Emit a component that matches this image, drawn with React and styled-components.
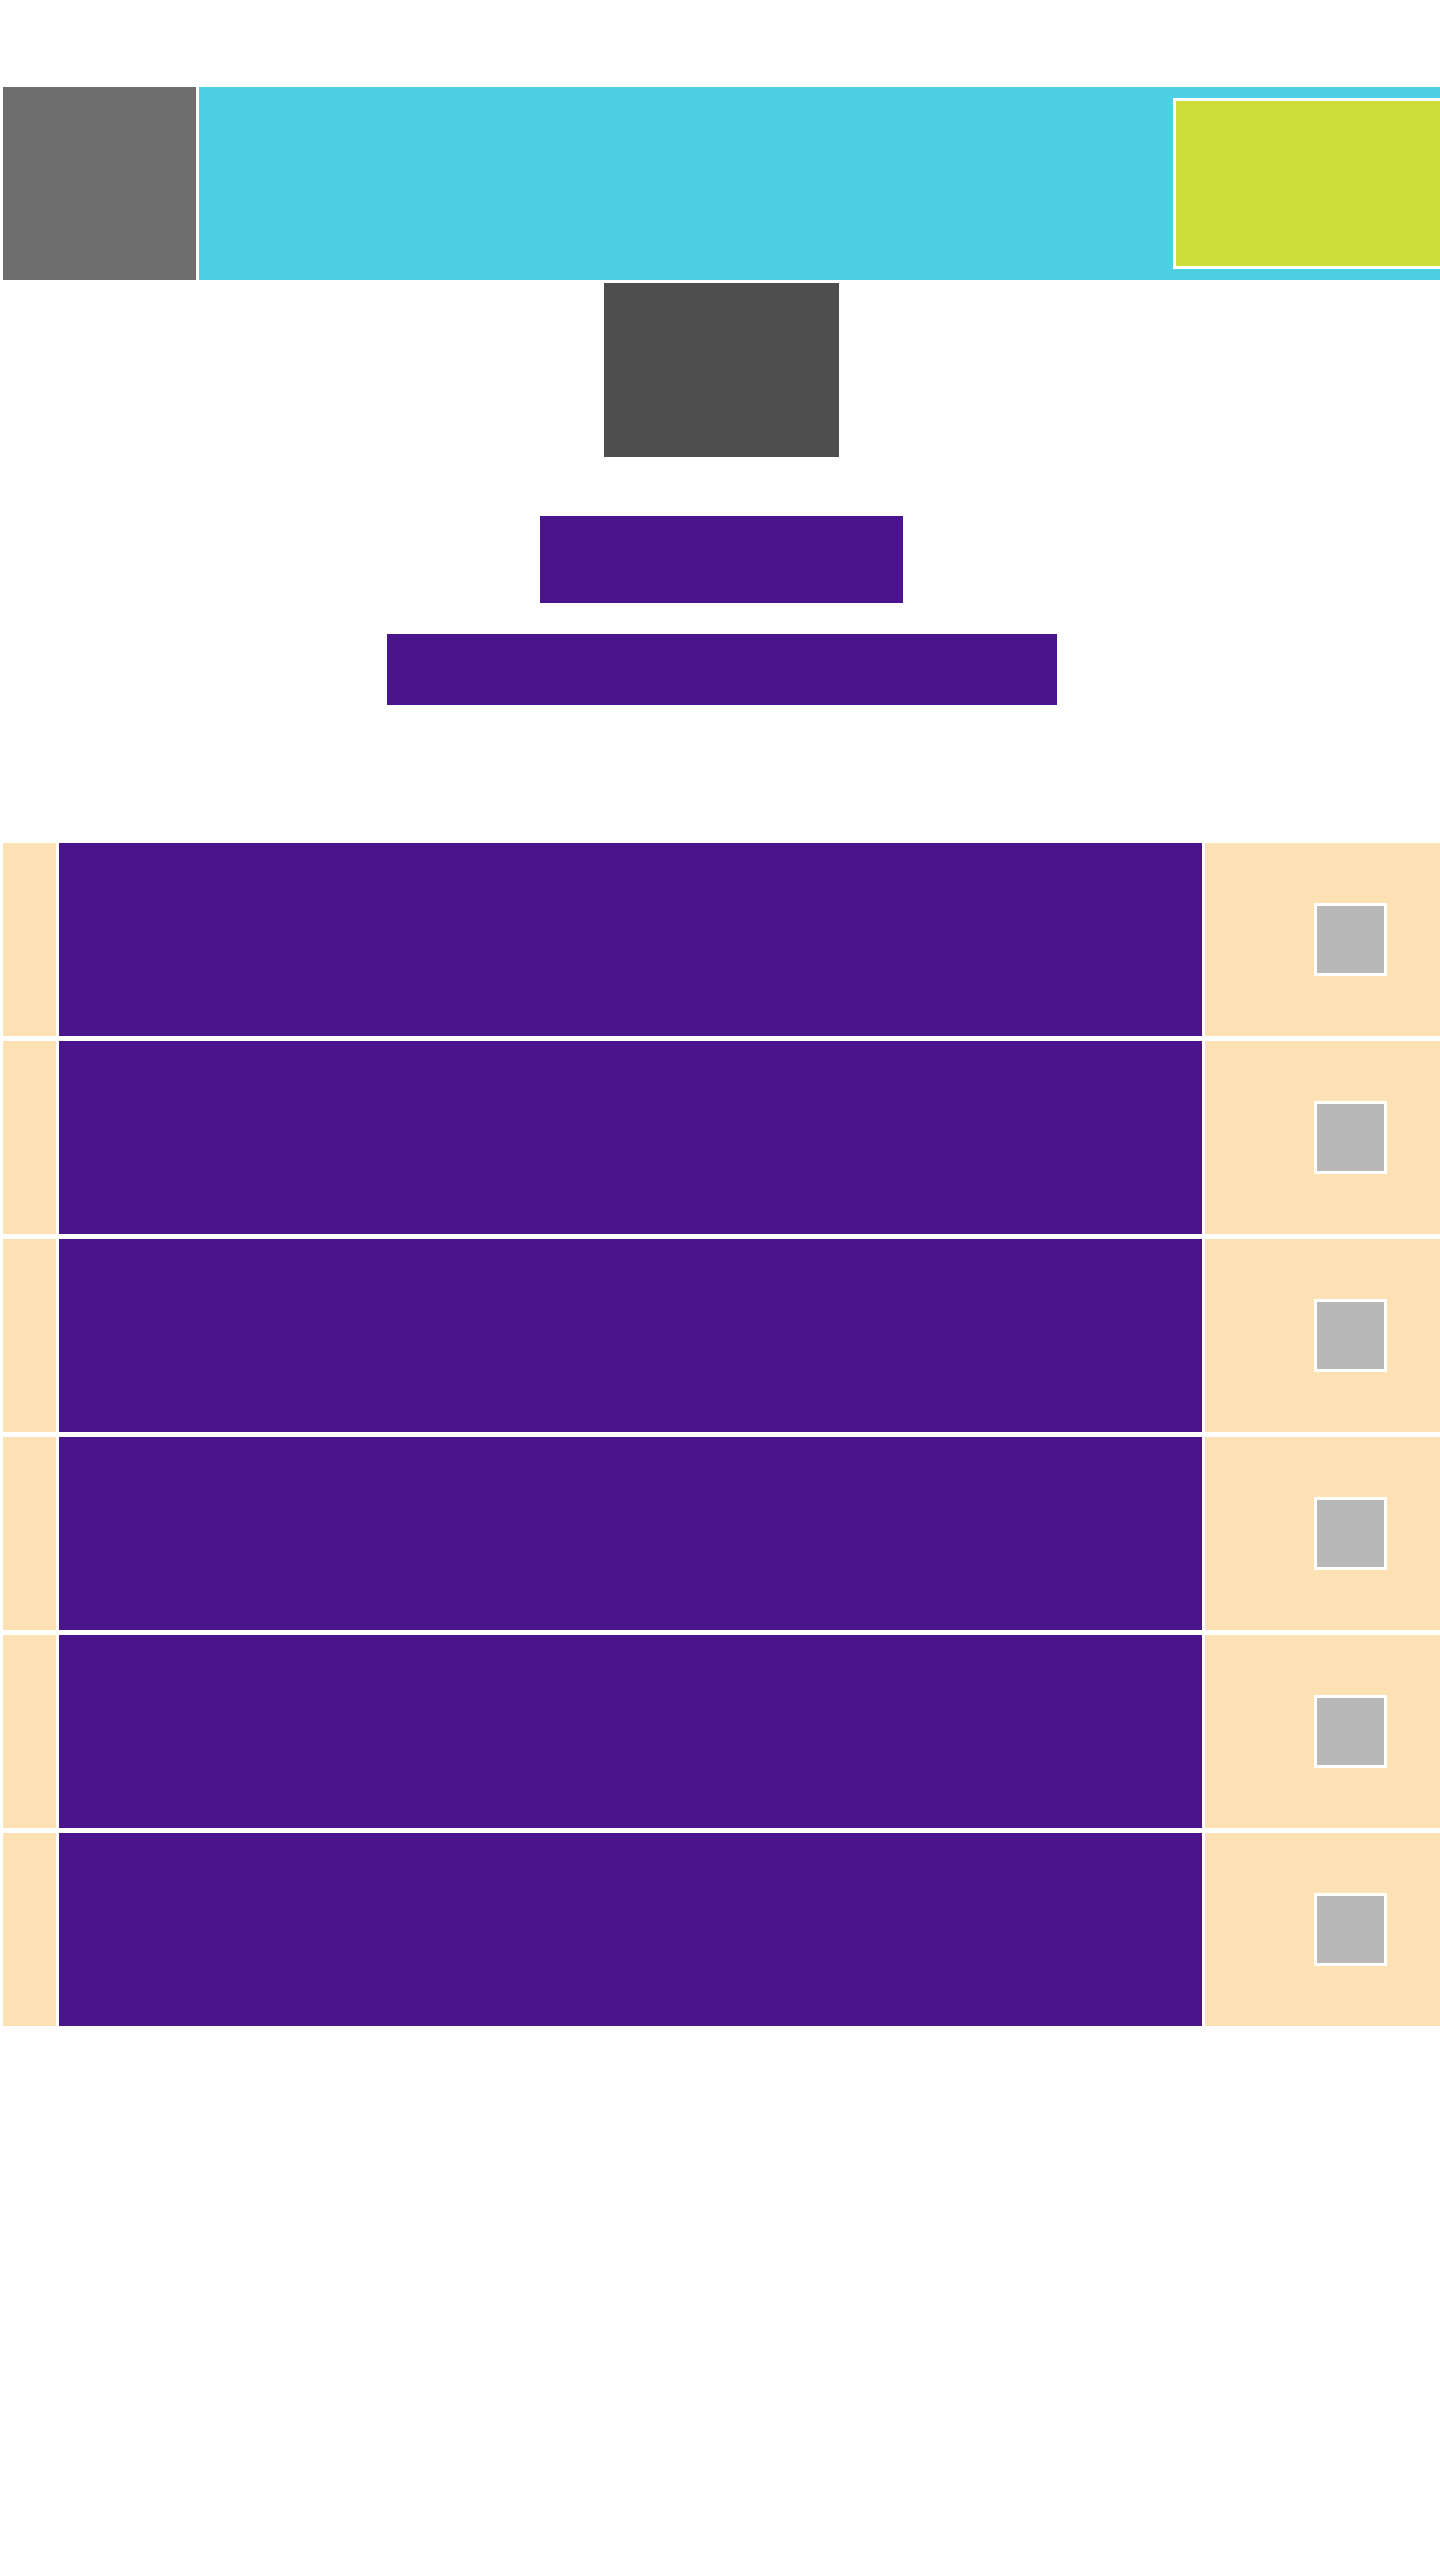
import React from 'react';
import styled, { createGlobalStyle } from 'styled-components';

const GlobalStyle = createGlobalStyle`
  html {
    background: #fefefe;
  }
  body {
    margin: 0;
    font-family: "Liberation Sans", Arial, sans-serif;
  }
`;

const Page = styled.div`
  width: 1440px;
  overflow: hidden;
  box-sizing: border-box;
  padding: 87px 0 0 3px;
  background: #ffffff;
  display: flex;
  flex-direction: column;
`;

const Header = styled.header`
  display: flex;
  gap: 3px;
  height: 193px;
`;

const Logo = styled.div`
  flex: 0 0 193px;
  background: #6e6e6e;
`;

const Banner = styled.div`
  flex: 1;
  display: flex;
  justify-content: flex-end;
  align-items: center;
  background: #4dd0e1;
`;

const BannerAction = styled.div`
  width: 267px;
  height: 171px;
  box-sizing: border-box;
  border: 3px solid #ffffff;
  border-right: none;
  background: #cfdd3a;
`;

const Avatar = styled.div`
  align-self: center;
  width: 235px;
  height: 174px;
  margin-top: 3px;
  background: #4e4e4e;
`;

const Block = styled.div`
  align-self: center;
  width: ${(p) => p.w}px;
  height: ${(p) => p.h}px;
  margin-top: ${(p) => p.top}px;
  background: #4a148c;
`;

const List = styled.div`
  display: flex;
  flex-direction: column;
  gap: 5px;
  margin-top: 138px;
`;

const Row = styled.div`
  display: flex;
  gap: 3px;
  height: 193px;
`;

const IndexCell = styled.div`
  flex: 0 0 53px;
  background: #fde0b3;
`;

const BodyCell = styled.div`
  flex: 0 0 1143px;
  background: #4a148c;
`;

const ActionCell = styled.div`
  flex: 1;
  display: flex;
  align-items: center;
  padding-left: 109px;
  background: #fde0b3;
`;

const Check = styled.div`
  width: 73px;
  height: 73px;
  box-sizing: border-box;
  border: 3px solid #ffffff;
  background: #b8b8b8;
`;

const rows = [1, 2, 3, 4, 5, 6];

const App = () => {
  return (
    <>
      <GlobalStyle />
      <Page>
        <Header>
          <Logo />
          <Banner>
            <BannerAction />
          </Banner>
        </Header>
        <Avatar />
        <Block w={363} h={87} top={59} />
        <Block w={670} h={71} top={31} />
        <List>
          {rows.map((id) => (
            <Row key={id}>
              <IndexCell />
              <BodyCell />
              <ActionCell>
                <Check />
              </ActionCell>
            </Row>
          ))}
        </List>
      </Page>
    </>
  );
};

export default App;
